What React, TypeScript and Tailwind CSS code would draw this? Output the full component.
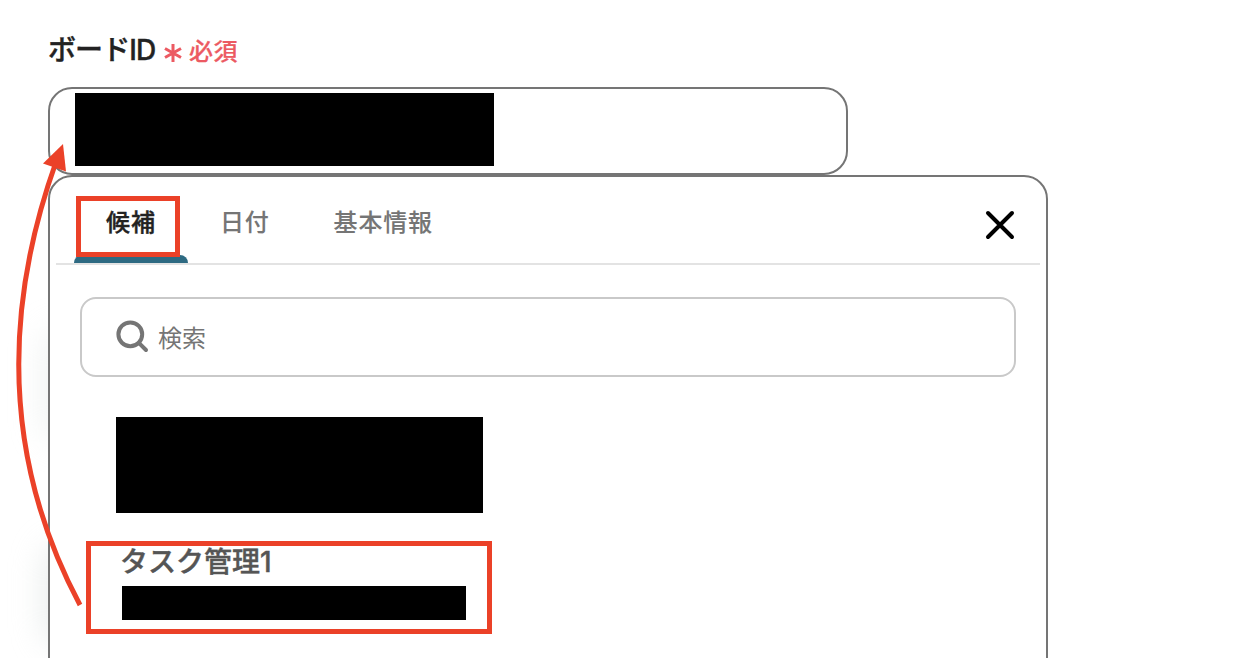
import { useState } from 'react';

const TABS = ['候補', '日付', '基本情報'];

function CloseIcon() {
  return (
    <svg className="h-8 w-8" viewBox="0 0 32 32" fill="none" stroke="#000" strokeWidth="4" strokeLinecap="round">
      <path d="M4 4L28 28M28 4L4 28" />
    </svg>
  );
}

function SearchIcon() {
  return (
    <svg className="h-8 w-8 shrink-0 overflow-visible" viewBox="0 0 32 32" fill="none" stroke="#757575" strokeWidth="4" strokeLinecap="round">
      <circle cx="14.3" cy="13.3" r="11.9" />
      <path d="M22.8 21.800L30 29" />
    </svg>
  );
}

function RequiredMark() {
  return (
    <svg className="h-[18px] w-[18px]" viewBox="0 0 18 18" fill="none" stroke="#ec5a62" strokeWidth="3">
      <path d="M9 0V18M1 4.500L17 13.500M17 4.500L1 13.500" />
    </svg>
  );
}

export default function App() {
  const [activeTab, setActiveTab] = useState('候補');
  const [query, setQuery] = useState('');

  return (
    <div className="relative h-[658px] w-[1246px] overflow-hidden bg-white pl-12 font-['Inter','Noto_Sans_CJK_JP',sans-serif]">
      {/* Label */}
      <div className="flex h-[87px] items-start pt-[30px] leading-10">
        <label className="w-[116px] whitespace-nowrap text-[28px] font-medium tracking-[-0.9px] text-[#222] [-webkit-text-stroke:0.4px_#222]">
          ボードID
        </label>
        <span className="mt-[14px]">
          <RequiredMark />
        </span>
        <span className="ml-[7px] mt-[2px] text-2xl leading-10 font-medium tracking-[0.5px] text-[#ec5a62] [-webkit-text-stroke:0.2px_#ec5a62]">
          必須
        </span>
      </div>

      {/* Selected value */}
      <div className="h-[88px] w-[800px] rounded-3xl border-2 border-[#757575] pl-[25px] pt-1">
        <div className="h-[73px] w-[419px] bg-black" />
      </div>

      {/* Dropdown */}
      <div className="relative h-[600px] w-[1000px]">
        <div className="absolute -left-1 top-[155px] h-[110px] w-10 rounded-full bg-[#dfe5e3]/50 blur-lg" />
        <div className="absolute -left-1 top-[370px] h-[100px] w-10 rounded-full bg-[#d4dcda]/50 blur-lg" />
        <div className="relative h-full rounded-t-3xl border-2 border-[#757575] bg-white">
          <div className="mx-[6px] flex h-[88px] items-start border-b-2 border-[#e3e3e3]">
            <div className="ml-[18px] flex h-[86px] text-2xl font-medium">
              {TABS.map((tab) => (
                <button
                  key={tab}
                  onClick={() => setActiveTab(tab)}
                  className={
                    activeTab === tab
                      ? 'relative flex h-full flex-col items-center px-8 pt-[26px] leading-10 tracking-[1px] text-[#222] [-webkit-text-stroke:0.4px_#222]'
                      : 'relative flex h-full flex-col items-center px-8 pt-[26px] leading-10 tracking-[0.8px] text-[#757575] [-webkit-text-stroke:0.1px_#757575]'
                  }
                >
                  {tab}
                  {activeTab === tab && (
                    <span className="absolute bottom-0 left-0 h-2 w-full rounded-t-lg bg-[#2e6a82]" />
                  )}
                </button>
              ))}
            </div>
            <button className="ml-auto mr-6 mt-8">
              <CloseIcon />
            </button>
          </div>

          <div className="mx-[30px] mt-8 flex h-20 items-center rounded-2xl border-2 border-[#c9c9c9] pl-[34px]">
            <SearchIcon />
            <input
              value={query}
              onChange={(e) => setQuery(e.target.value)}
              placeholder="検索"
              className="ml-[10px] mt-0.5 h-10 flex-1 text-2xl text-[#757575] outline-none placeholder:text-[#757575]"
            />
          </div>

          {/* Candidates */}
          <div className="ml-[66px] mt-10 h-24 w-[367px] bg-black" />
          <div className="ml-9 mt-7 h-[93px] w-[406px] border-[5px] border-[#eb4128] pl-[31px]">
            <div className="-ml-[2px] h-10 whitespace-nowrap text-[28px] font-medium leading-[32px] text-[#555] [-webkit-text-stroke:0.4px_#555]">
              タスク管理1
            </div>
            <div className="h-[34px] w-[344px] bg-black" />
          </div>
        </div>
      </div>

      {/* Annotations */}
      <div className="pointer-events-none absolute left-[76px] top-[196px] h-[61px] w-[104px] border-[5px] border-[#eb4128]" />
      <svg className="pointer-events-none absolute left-0 top-0 h-[658px] w-[100px]" viewBox="0 0 100 658" fill="none">
        <path d="M80 605Q-29 400 56 162" stroke="#eb4128" strokeWidth="5" />
        <path d="M63 144L43 163.500L66 171.500Z" fill="#eb4128" />
      </svg>
    </div>
  );
}
